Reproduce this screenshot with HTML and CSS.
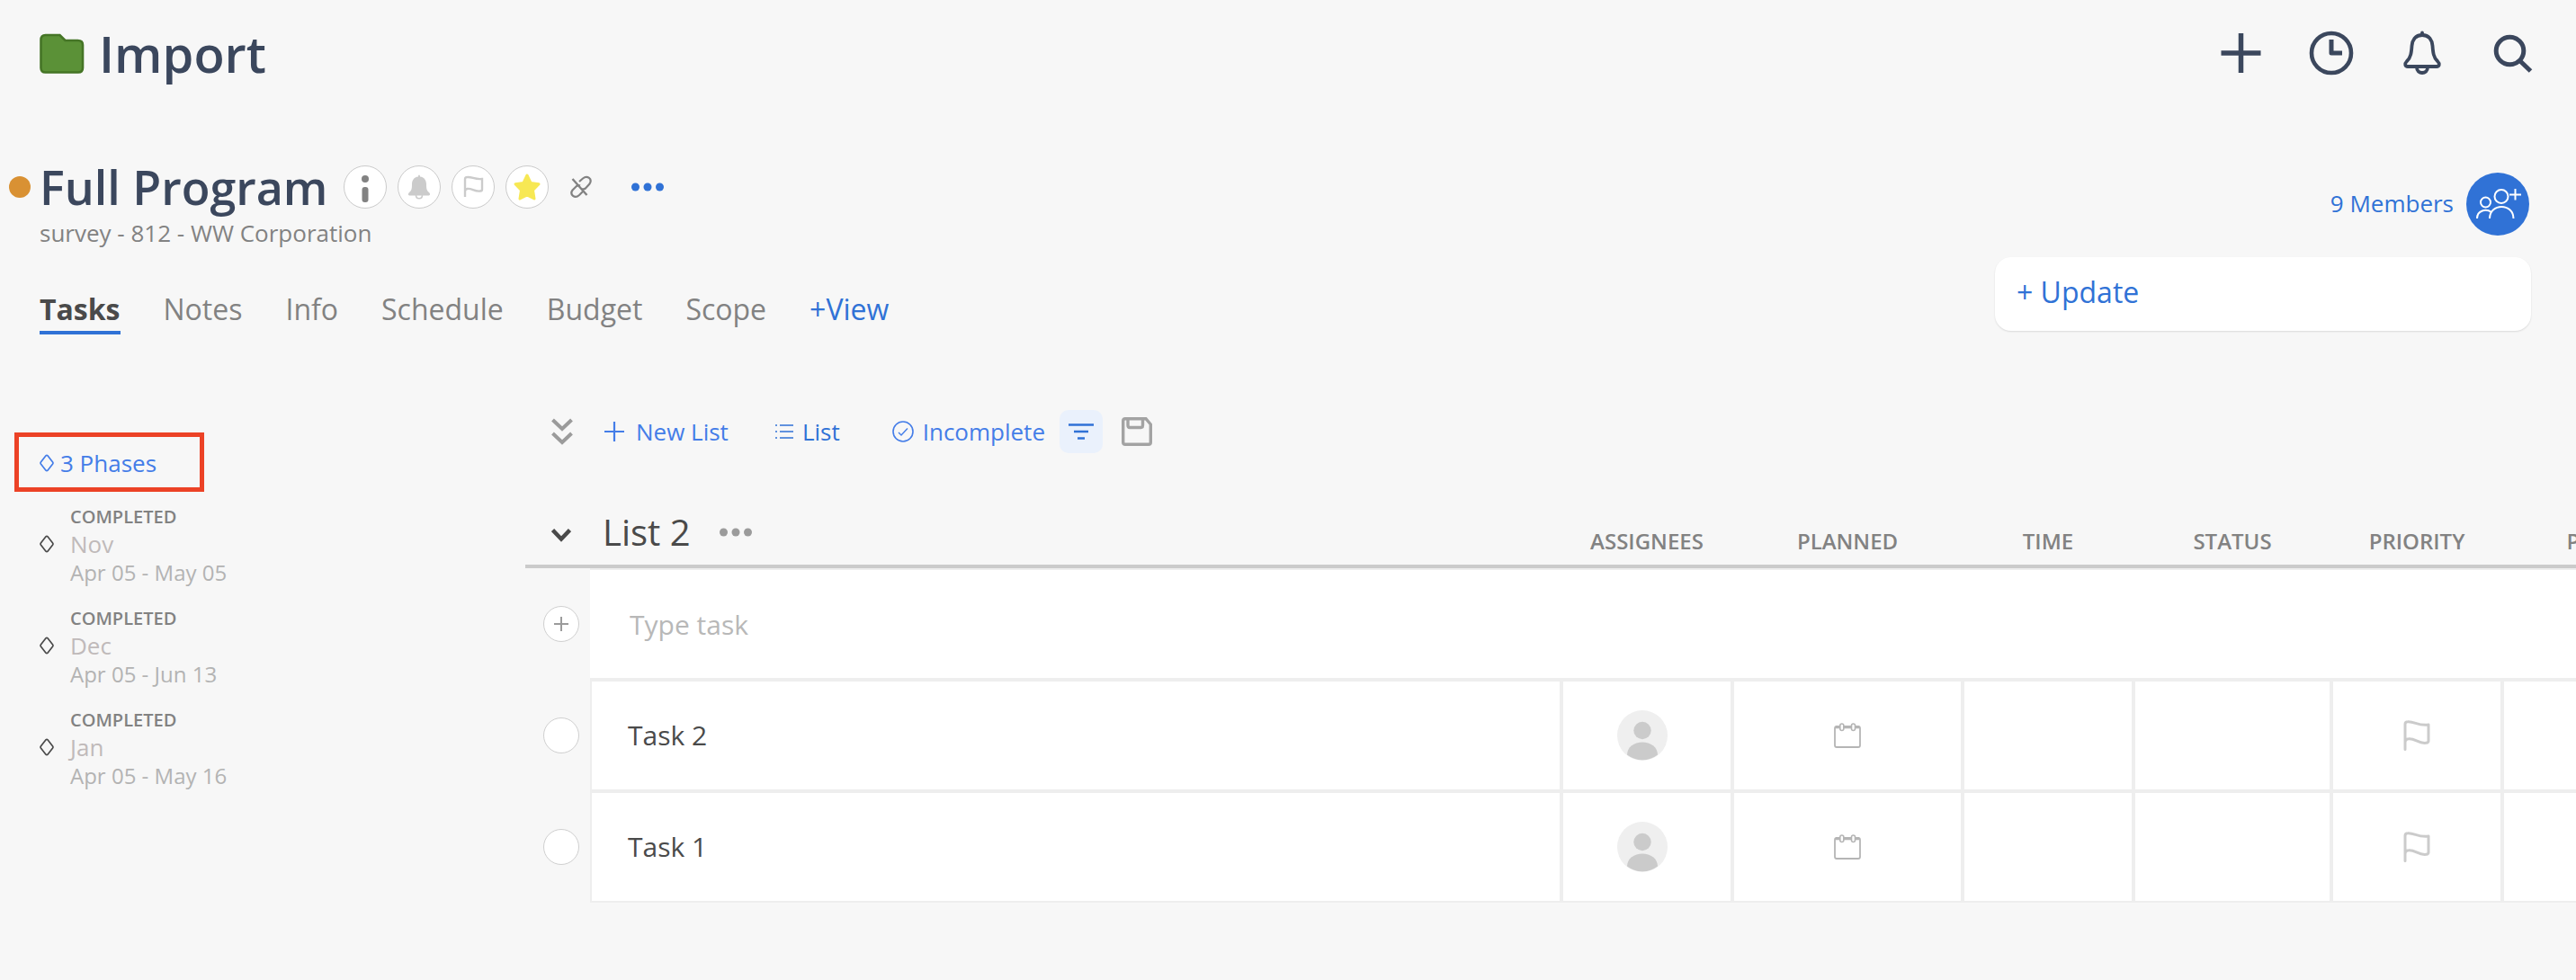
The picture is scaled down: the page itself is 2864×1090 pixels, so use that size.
FILE: index.html
```html
<!DOCTYPE html>
<html lang="en">
<head>
<meta charset="utf-8">
<title>Import - Full Program</title>
<meta name="viewport" content="width=device-width, initial-scale=1">
<link rel="stylesheet" href="styles.css">
</head>
<body>
<svg class="sprite" aria-hidden="true">
  <symbol id="diamond" viewBox="0 0 16 20"><path d="M7 1.8Q8 .8 9 1.8L14.600 9Q15.300 10 14.600 11L9 18.200Q8 19.200 7 18.200L1.400 11Q.7 10 1.400 9Z" fill="none" stroke="currentColor" stroke-width="1.700"/></symbol>
  <symbol id="flag" viewBox="0 0 30 34"><path d="M2 32.500V4.500Q2 1.700 5 1.700C13 1.300 16 6.500 28 5V23Q28 25 25.500 25.300C17 26.500 13 20 6 20.800Q2 21 2 25" fill="none" stroke="currentColor" stroke-width="3" stroke-linecap="round" stroke-linejoin="round"/></symbol>
  <symbol id="calendar" viewBox="0 0 30 28"><path d="M1 6Q1 4 3 4H27Q29 4 29 6V25Q29 27 27 27H3Q1 27 1 25Z" fill="none" stroke="currentColor" stroke-width="1.800"/><path d="M2 4.700H28" stroke="currentColor" stroke-width="3.200"/><rect x="6.800" y="1" width="4" height="7.500" rx="2" fill="#fff" stroke="currentColor" stroke-width="1.600"/><rect x="19.500" y="1" width="4" height="7.500" rx="2" fill="#fff" stroke="currentColor" stroke-width="1.600"/></symbol>
  <symbol id="avatar" viewBox="0 0 56 56"><circle cx="28" cy="28" r="28" fill="#efefef"/><circle cx="28" cy="22.500" r="9.700" fill="#cbcbcb"/><path d="M11 49.500C11 41 19 35.500 28 35.500S45 41 45 49.500A28 28 0 0 1 11 49.500Z" fill="#cbcbcb"/></symbol>
</svg>

<header class="topbar">
  <div class="brand">
    <svg width="50" height="48" viewBox="0 0 50 48"><path d="M6.500 4H22.500L28.500 10H42.500Q48 10 48 15V40.500Q48 45.500 43 45.500H6.500Q1.500 45.500 1.500 40.500V9.500Q1.500 4 6.500 4Z" fill="#5b9137" stroke="#457526" stroke-width="2.600"/></svg>
    <h1 class="brand-name">Import</h1>
  </div>
  <nav class="actions" aria-label="Global">
    <button class="icon-btn" type="button" aria-label="Add"><svg width="50" height="50" viewBox="0 0 50 50"><path d="M25.500 3V47M3.500 25H47.500" stroke="currentColor" stroke-width="5.500"/></svg></button>
    <button class="icon-btn" type="button" aria-label="Recent"><svg width="50" height="50" viewBox="0 0 50 50" fill="none" stroke="currentColor"><circle cx="25" cy="25" r="22" stroke-width="4.600"/><path d="M25 10V25H37" stroke-width="5" stroke-linejoin="round"/></svg></button>
    <button class="icon-btn" type="button" aria-label="Notifications"><svg width="50" height="50" viewBox="0 0 50 50" fill="none" stroke="currentColor" stroke-width="3.800"><path d="M25 2.500V5" stroke-linecap="round"/><path d="M25 5C17 5 14 11 13.500 17C13 24 12.500 30 8 34C5 37 6 40 9 40H41C44 40 45 37 42 34C37.500 30 37 24 36.500 17C36 11 33 5 25 5Z"/><path d="M19 41C19 49 31 49 31 41"/></svg></button>
    <button class="icon-btn" type="button" aria-label="Search"><svg width="50" height="50" viewBox="0 0 50 50" fill="none" stroke="currentColor"><circle cx="21.500" cy="22.500" r="15.300" stroke-width="5"/><path d="M32 33L44.500 45" stroke-width="5"/></svg></button>
  </nav>
</header>

<section class="project">
  <div class="project-main">
    <div class="title-row">
      <span class="status-dot"></span>
      <h2 class="title">Full Program</h2>
      <div class="badges">
        <button class="badge" type="button" aria-label="Details"><svg width="46" height="46" viewBox="0 0 46 46"><circle cx="23" cy="14" r="4" fill="#828282"/><rect x="19.500" y="23" width="7" height="17" rx="3" fill="#828282"/></svg></button>
        <button class="badge" type="button" aria-label="Follow"><svg width="46" height="46" viewBox="0 0 46 46"><path d="M23 9.500C23.800 9.500 24 10.500 24 11.500C29 12 31 16 31 20C31 25 31.500 27 34 29C36 31 35 32.500 33 32.500H13C11 32.500 10 31 12 29C14.500 27 15 25 15 20C15 16 17 12 22 11.500C22 10.500 22.200 9.500 23 9.500Z" fill="#cbcbcb"/><path d="M19.500 32C19.500 37 26.500 37 26.500 32" fill="none" stroke="#cbcbcb" stroke-width="1.600"/></svg></button>
        <button class="badge" type="button" aria-label="Priority"><svg width="23" height="26" viewBox="0 0 23 26"><path d="M2 24V4.500Q2 2 4.500 2C10 1.500 13 5 21 4V15.500Q21 17.500 19 17.500C13 18.500 9 14 4.500 15Q2 15.500 2 18" fill="none" stroke="#cbcbcb" stroke-width="2.400"/></svg></button>
        <button class="badge" type="button" aria-label="Favorite"><svg width="46" height="46" viewBox="0 0 46 46"><path d="M23 10L27 18.500L36 19.800L29.500 26.500L31 36L23 32L15 36L16.500 26.500L10 19.800L19 18.500Z" fill="#f7e854" stroke="#f7e854" stroke-width="3" stroke-linejoin="round"/></svg></button>
      </div>
      <button class="icon-btn link-btn" type="button" aria-label="Unlink"><svg width="24" height="26" viewBox="0 0 24 26" fill="none" stroke="currentColor" stroke-width="2.200"><path d="M10 7L14 3.500C19 -.5 25 4 21.500 9.500L17 14.500Q15 16 13 15"/><path d="M14 18L10 22C5 26.500 -1 21.500 2.500 16.500L7 12Q9 10.500 11 11.500"/><path d="M2.500 4L18.500 22" stroke-width="2.400"/></svg></button>
      <button class="icon-btn more-btn" type="button" aria-label="More"><svg width="36" height="10" viewBox="0 0 36 10" fill="currentColor"><circle cx="4.500" cy="5" r="4.500"/><circle cx="18" cy="5" r="4.500"/><circle cx="31.500" cy="5" r="4.500"/></svg></button>
    </div>
    <p class="subtitle">survey - 812 - WW Corporation</p>
    <nav class="tabs" aria-label="Views">
      <a class="tab tab-active" href="#tasks">Tasks</a>
      <a class="tab" href="#notes">Notes</a>
      <a class="tab" href="#info">Info</a>
      <a class="tab" href="#schedule">Schedule</a>
      <a class="tab" href="#budget">Budget</a>
      <a class="tab" href="#scope">Scope</a>
      <a class="tab tab-add" href="#view">+View</a>
    </nav>
  </div>
  <div class="project-side">
    <div class="members">
      <a class="members-link" href="#members">9 Members</a>
      <button class="members-btn" type="button" aria-label="Add member"><svg width="70" height="70" viewBox="0 0 70 70" fill="none" stroke="#fff" stroke-width="2"><circle cx="39" cy="26.500" r="7.500"/><circle cx="21.500" cy="33" r="5.500"/><path d="M26 51C26 33.500 52.500 33.500 52.500 51"/><path d="M12 51C12 42 22 39.500 28 44"/><path d="M54.500 18V30.500M48 24.500H61"/></svg></button>
    </div>
    <button class="update" type="button">+ Update</button>
  </div>
</section>

<main class="workspace">
  <aside class="phases">
    <button class="phases-toggle" type="button"><svg width="16" height="20"><use href="#diamond"/></svg>3 Phases</button>
    <ul class="phase-list">
      <li class="phase"><svg width="16" height="20"><use href="#diamond"/></svg><div><p class="phase-state">COMPLETED</p><p class="phase-name">Nov</p><p class="phase-dates">Apr 05 - May 05</p></div></li>
      <li class="phase"><svg width="16" height="20"><use href="#diamond"/></svg><div><p class="phase-state">COMPLETED</p><p class="phase-name">Dec</p><p class="phase-dates">Apr 05 - Jun 13</p></div></li>
      <li class="phase"><svg width="16" height="20"><use href="#diamond"/></svg><div><p class="phase-state">COMPLETED</p><p class="phase-name">Jan</p><p class="phase-dates">Apr 05 - May 16</p></div></li>
    </ul>
  </aside>

  <section class="board">
    <div class="toolbar">
      <button class="icon-btn collapse-all" type="button" aria-label="Collapse all"><svg width="24" height="30" viewBox="0 0 24 30" fill="none" stroke="currentColor" stroke-width="4"><path d="M1.500 2L12 12L22.500 2M1.500 17L12 27L22.500 17"/></svg></button>
      <button class="tool new-list" type="button"><svg width="22" height="22" viewBox="0 0 22 22" stroke="currentColor" stroke-width="2.200"><path d="M11 0V22M0 11H22"/></svg>New List</button>
      <button class="tool layout" type="button"><svg width="20" height="18" viewBox="0 0 20 18" stroke="currentColor" stroke-width="1.700"><path d="M5 2H20M5 9H20M5 16H20M0 2H2M0 9H2M0 16H2"/></svg>List</button>
      <button class="tool state" type="button"><svg width="24" height="24" viewBox="0 0 24 24" fill="none" stroke="currentColor" stroke-width="1.600"><circle cx="12" cy="12" r="11"/><path d="M7 13L10 16L17 8.500" stroke-width="1.400"/></svg>Incomplete</button>
      <button class="filter" type="button" aria-label="Filter"><svg width="28" height="20" viewBox="0 0 28 20" stroke="currentColor" stroke-width="2.500"><path d="M0 2.500H28M6 10H22M10 17.500H18"/></svg></button>
      <button class="icon-btn save" type="button" aria-label="Save view"><svg width="34" height="32" viewBox="0 0 34 32" fill="none" stroke="currentColor" stroke-width="3.400"><path d="M4 1.700H27L32.300 8V28Q32.300 30.300 30 30.300H4Q1.700 30.300 1.700 28V4Q1.700 1.700 4 1.700Z"/><path d="M7 2V9Q7 11.500 9 11.500H21.500Q23.500 11.500 23.500 9V2"/></svg></button>
    </div>

    <table class="tasks">
      <colgroup><col class="c-mark"><col><col class="c-md"><col class="c-xl"><col class="c-md"><col class="c-lg"><col class="c-md"><col class="c-sm"></colgroup>
      <thead>
        <tr>
          <th class="mark mark-head"><button class="icon-btn collapse" type="button" aria-label="Collapse list"><svg width="22" height="17" viewBox="0 0 22 17" fill="none" stroke="currentColor" stroke-width="4.500"><path d="M1.500 2.500L11 12.500L20.500 2.500"/></svg></button></th>
          <th class="list-head"><div class="list-title">List 2<button class="icon-btn list-more" type="button" aria-label="List menu"><svg width="36" height="10" viewBox="0 0 36 10" fill="currentColor"><circle cx="4.500" cy="5" r="4.500"/><circle cx="18" cy="5" r="4.500"/><circle cx="31.500" cy="5" r="4.500"/></svg></button></div></th>
          <th>ASSIGNEES</th><th>PLANNED</th><th>TIME</th><th>STATUS</th><th>PRIORITY</th><th>P</th>
        </tr>
      </thead>
      <tbody>
        <tr>
          <td class="mark"><button class="round" type="button" aria-label="Add task"><svg width="16" height="16" viewBox="0 0 16 16" stroke="currentColor" stroke-width="2"><path d="M8 0V16M0 8H16"/></svg></button></td>
          <td class="entry" colspan="7"><input class="entry-input" type="text" placeholder="Type task" aria-label="New task name"></td>
        </tr>
        <tr>
          <td class="mark"><input class="round" type="checkbox" id="task-2"></td>
          <td class="name"><label for="task-2">Task 2</label></td>
          <td class="assignee"><svg width="56" height="56"><use href="#avatar"/></svg></td>
          <td class="planned"><svg width="30" height="28"><use href="#calendar"/></svg></td>
          <td></td><td></td>
          <td class="priority"><svg width="30" height="34"><use href="#flag"/></svg></td>
          <td></td>
        </tr>
        <tr>
          <td class="mark"><input class="round" type="checkbox" id="task-1"></td>
          <td class="name"><label for="task-1">Task 1</label></td>
          <td class="assignee"><svg width="56" height="56"><use href="#avatar"/></svg></td>
          <td class="planned"><svg width="30" height="28"><use href="#calendar"/></svg></td>
          <td></td><td></td>
          <td class="priority"><svg width="30" height="34"><use href="#flag"/></svg></td>
          <td></td>
        </tr>
      </tbody>
    </table>
  </section>
</main>
</body>
</html>
```
FILE: styles.css
```css
* { box-sizing: border-box; }

body {
  margin: 0;
  min-height: 100vh;
  overflow-x: hidden;
  background: #f7f7f7;
  color: #4a4a4a;
  font-family: "Open Sans", "Noto Sans", sans-serif;
  font-size: 26px;
}

h1, h2, p, ul { margin: 0; padding: 0; }
ul { list-style: none; }
a { text-decoration: none; }
svg { display: block; flex: none; }
button, input { font: inherit; }
button { padding: 0; border: 0; background: none; color: inherit; cursor: pointer; }

.sprite { position: absolute; width: 0; height: 0; }

/* Top bar */
.topbar {
  display: flex;
  align-items: center;
  justify-content: space-between;
  height: 118px;
  padding: 0 45px 0 44px;
  color: #3b475d;
}
.brand { display: flex; align-items: center; gap: 16px; }
.brand-name { font-size: 56px; font-weight: 600; line-height: 76px; }
.actions { display: flex; gap: 51px; }
.icon-btn { display: inline-flex; align-items: center; justify-content: center; }

/* Project header */
.project {
  display: flex;
  justify-content: space-between;
  padding: 54px 50px 0 10px;
}
.title-row { display: flex; align-items: center; height: 72px; }
.status-dot { width: 24px; height: 24px; margin-right: 10px; border-radius: 50%; background: #d99133; }
.title { color: #3b475d; font-size: 52px; font-weight: 600; line-height: 72px; }
.badges { display: flex; gap: 12px; margin-left: 18px; }
.badge {
  display: flex;
  align-items: center;
  justify-content: center;
  width: 48px;
  height: 48px;
  border: 1px solid #cbcbcb;
  border-radius: 50%;
  background: #fff;
}
.link-btn { margin-left: 24px; color: #828282; }
.more-btn { margin-left: 44px; color: #3072d6; }
.subtitle { padding-left: 34px; color: #828282; line-height: 30px; }

.tabs { display: flex; gap: 48px; margin-top: 48px; padding-left: 34px; font-size: 32px; line-height: 44px; }
.tab { padding-bottom: 2px; border-bottom: 4px solid transparent; color: #828282; }
.tab-active { border-color: #3072d6; color: #4a4a4a; font-weight: 700; }
.tab-add { color: #3072d6; }

.project-side { width: 596px; padding-top: 20px; }
.members { display: flex; align-items: center; justify-content: flex-end; gap: 14px; padding-right: 2px; }
.members-link { padding-bottom: 2px; color: #3072d6; }
.members-btn { width: 70px; height: 70px; border-radius: 50%; background: #3072d6; }
.update {
  width: 100%;
  height: 82px;
  margin-top: 24px;
  padding: 0 24px 6px;
  border-radius: 18px;
  background: #fff;
  box-shadow: 0 1px 2px rgba(0, 0, 0, .12);
  color: #3072d6;
  font-size: 32px;
  text-align: left;
}

/* Workspace */
.workspace { display: flex; padding-top: 84px; }
.phases { flex: none; width: 584px; padding: 25px 16px 0; }
.phases-toggle {
  display: flex;
  align-items: center;
  gap: 7px;
  width: 211px;
  height: 66px;
  padding: 2px 0 0 23px;
  border: 5px solid #ec4226;
  color: #447de8;
}
.phase-list { display: flex; flex-direction: column; gap: 21px; padding: 14px 0 0 28px; }
.phase { display: flex; align-items: center; gap: 18px; }
.phase svg { margin-bottom: 4px; }
.phase-state { color: #828282; font-size: 20px; font-weight: 600; line-height: 28px; }
.phase-name { color: #c0baba; line-height: 32px; }
.phase-dates { color: #b3b3b3; font-size: 24px; line-height: 32px; }

.board { flex: 1; min-width: 0; overflow: hidden; }
.toolbar { display: flex; align-items: center; height: 48px; padding-left: 29px; }
.tool { display: flex; align-items: center; gap: 10px; color: #447de8; }
.collapse-all { margin-right: 35px; color: #9b9b9b; }
.new-list { gap: 13px; margin-right: 52px; }
.layout { margin-right: 58px; color: #3072d6; }
.state { margin-right: 16px; }
.filter {
  display: flex;
  align-items: center;
  justify-content: center;
  width: 48px;
  height: 48px;
  border-radius: 10px;
  background: #eaf1fc;
  color: #3072d6;
}
.save { margin-left: 21px; color: #a3a3a3; }

/* Task table: the last column runs past the right edge of the board */
.tasks {
  width: calc(100% + 76px);
  table-layout: fixed;
  border-collapse: separate;
  border-spacing: 0;
}
.c-mark { width: 72px; }
.c-sm { width: 158px; }
.c-md { width: 190px; }
.c-lg { width: 220px; }
.c-xl { width: 256px; }

.tasks th {
  height: 128px;
  padding: 0 0 10px;
  border-bottom: 4px solid #cbcbcb;
  color: #828282;
  font-size: 24px;
  font-weight: 600;
  line-height: 32px;
  vertical-align: bottom;
}
.tasks td { height: 124px; padding: 0; border: 2px solid #eee; background: #fff; }
.tasks .mark { padding-left: 20px; border-width: 0; background: none; text-align: left; }
.tasks .mark-head { padding: 0 0 24px 29px; border-bottom-width: 4px; }
.collapse { display: flex; color: #4a4a4a; }
.tasks .list-head { padding: 0 0 8px 14px; }
.list-title { display: flex; align-items: center; gap: 32px; color: #4a4a4a; font-size: 40px; font-weight: 400; line-height: 56px; }
.list-more { color: #9b9b9b; }

.round {
  display: flex;
  align-items: center;
  justify-content: center;
  width: 40px;
  height: 40px;
  margin: 0;
  border: 1px solid #cfcfcf;
  border-radius: 50%;
  background: #fff;
  color: #9b9b9b;
  appearance: none;
}
.tasks .entry { border-width: 2px 0; }
.entry-input { display: block; width: 100%; height: 120px; padding: 0 44px; border: 0; background: none; outline: 0; }
.entry-input::placeholder { color: #b8b8b8; opacity: 1; }
.entry-input, .name { font-size: 30px; }
.tasks .name { padding: 0 0 2px 40px; }
.tasks td svg { margin: 0 auto; }
.tasks .assignee { padding-right: 10px; }
.planned { color: #b5b5b5; }
.priority { color: #cbcbcb; }
```
